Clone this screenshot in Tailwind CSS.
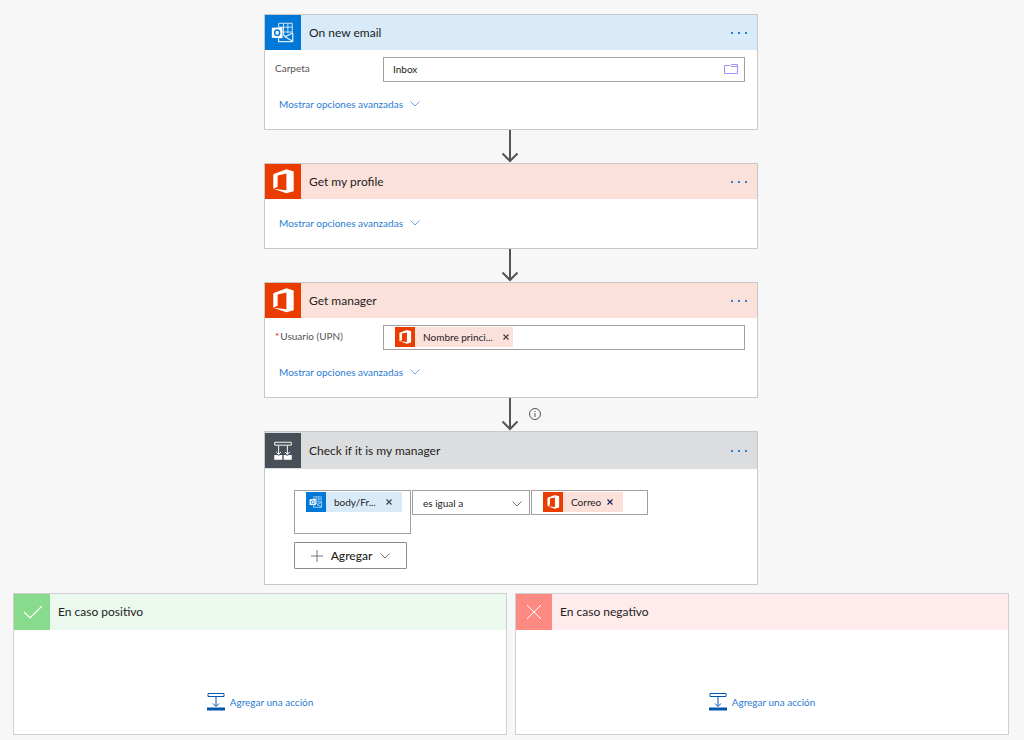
<!DOCTYPE html>
<html lang="es">
<head>
    <meta charset="UTF-8">
    <meta name="viewport" content="width=device-width, initial-scale=1.0">
    <title>Flow designer</title>
    <script src="https://cdn.jsdelivr.net/npm/@tailwindcss/browser@4"></script>
</head>
<body class="min-h-screen bg-[#f7f7f7] pt-[14px] pr-[15px] pb-1 pl-[13px] font-['Lato','Open_Sans',sans-serif] text-[10px] leading-4 text-[#222222]">

    <!-- Shared icons -->
    <svg class="hidden" aria-hidden="true">
        <symbol id="outlook" viewBox="0 0 36 36">
            <rect width="36" height="36" fill="#0078d7"/>
            <g fill="none" stroke="#ffffff" opacity=".85">
                <path d="M13.500 12.500V8.500H27.500V19M18.500 8.500V21M23 8.500V19M14 12.500H27.500M17 17.500H27.500"/>
                <path stroke-width="1.300" d="M28 18.500L20 22.500L28 27M28 18.500V27.500H13.500V24M18 20L21 22.500"/>
            </g>
            <path fill="#ffffff" d="M6.500 13L17.500 12.500V24L6.500 23.500Z"/>
            <ellipse cx="12" cy="18.300" rx="2.600" ry="2.900" fill="none" stroke="#0078d7" stroke-width="1.500"/>
        </symbol>
        <symbol id="office" viewBox="0 0 36 36">
            <rect width="36" height="36" fill="#eb3c00"/>
            <path fill="#ffffff" d="M8 10.500L21.500 5.500L29 7.700V28L21.500 30.200L8 25.500L21.500 27V9.700L12.500 11.800V23.500L8 25.500Z"/>
        </symbol>
        <symbol id="condition" viewBox="0 0 36 36">
            <rect width="36" height="36" fill="#484f58"/>
            <path fill="none" stroke="#ffffff" d="M9.500 9.500H26.500V12.500H9.500ZM13.500 13V22M22.500 13V22M11 19.500L13.500 22L16 19.500M20 19.500L22.500 22L25 19.500"/>
            <path fill="#ffffff" d="M9 22.500H12L13.500 23.500L15 22.500H17.300V27.500H9ZM18.700 22.500H21L22.500 23.500L24 22.500H27V27.500H18.700Z"/>
        </symbol>
        <symbol id="chevron" viewBox="0 0 10 6">
            <path d="M.5 .5L5 5L9.500 .5" fill="none" stroke="currentColor"/>
        </symbol>
        <symbol id="dots" viewBox="0 0 18 2">
            <path d="M0 0H2V2H0ZM7 0H9V2H7ZM14 0H16V2H14Z" fill="currentColor"/>
        </symbol>
        <symbol id="arrow" viewBox="0 0 18 33">
            <path d="M9 0V31M1.500 23.500L9 31L16.500 23.500" fill="none" stroke="#555555" stroke-width="2"/>
        </symbol>
        <symbol id="remove" viewBox="0 0 6 6">
            <path d="M.5 .5L5.500 5.500M5.500 .5L.5 5.500" stroke="currentColor" stroke-width="1.200"/>
        </symbol>
        <symbol id="add-step" viewBox="0 0 18 18">
            <path d="M1 .5H17V3.500H1ZM9 3.500V13M6 10.500L9 13.500L12 10.500" fill="none" stroke="#0058ad"/>
            <path d="M0 14.500H18V17.500H0Z" fill="#0058ad"/>
        </symbol>
    </svg>

    <main class="flex flex-col">

        <!-- Trigger -->
        <section class="mx-auto w-[calc(50%-4px)] border border-[#c8c8c8] bg-white">
            <header class="flex h-[35px] items-center bg-[#d9eaf8]">
                <svg class="h-[35px] w-9 bg-[#0078d7]" aria-hidden="true"><use href="#outlook"/></svg>
                <h2 class="ml-2 grow pt-px text-xs">On new email</h2>
                <button class="mr-2 text-[#2a80dc]" aria-label="Menu"><svg class="h-[2px] w-[18px]"><use href="#dots"/></svg></button>
            </header>
            <div class="flex pt-[7px] pr-3 pl-[10px]">
                <label for="folder" class="w-[108px] shrink-0 pt-[3px] text-[#555555]">Carpeta</label>
                <div class="flex h-[25px] grow items-center border border-[#a0a0a0] pr-[6px] pb-px pl-[9px]">
                    <input id="folder" type="text" value="Inbox" class="min-w-0 grow outline-none">
                    <button class="text-[#9c94f4]" aria-label="Elegir carpeta">
                        <svg class="h-[10px] w-[14px]" viewBox="0 0 14 10" fill="none" stroke="currentColor"><path d="M.5 1.500H6.500L7.500 .5H13.500V9.500H.5ZM7 2.500H13.500"/></svg>
                    </button>
                </div>
            </div>
            <div class="px-[14px] pt-[14px] pb-[17px]">
                <a href="#" class="inline-flex items-center gap-[7px] text-[#2b7cd3]">Mostrar opciones avanzadas <svg class="h-[6px] w-[10px] text-[#6fa3e2]"><use href="#chevron"/></svg></a>
            </div>
        </section>

        <div class="flex justify-center pr-[2px]"><svg class="h-[33px] w-[18px]"><use href="#arrow"/></svg></div>

        <!-- Profile -->
        <section class="mx-auto w-[calc(50%-4px)] border border-[#c8c8c8] bg-white">
            <header class="flex h-[35px] items-center bg-[#fce1da]">
                <svg class="h-[35px] w-9 bg-[#eb3c00]" aria-hidden="true"><use href="#office"/></svg>
                <h2 class="ml-2 grow pt-px text-xs">Get my profile</h2>
                <button class="mr-2 text-[#2a80dc]" aria-label="Menu"><svg class="h-[2px] w-[18px]"><use href="#dots"/></svg></button>
            </header>
            <div class="px-[14px] pt-4 pb-[17px]">
                <a href="#" class="inline-flex items-center gap-[7px] text-[#2b7cd3]">Mostrar opciones avanzadas <svg class="h-[6px] w-[10px] text-[#6fa3e2]"><use href="#chevron"/></svg></a>
            </div>
        </section>

        <div class="flex justify-center pr-[2px]"><svg class="h-[33px] w-[18px]"><use href="#arrow"/></svg></div>

        <!-- Manager -->
        <section class="mx-auto w-[calc(50%-4px)] border border-[#c8c8c8] bg-white">
            <header class="flex h-[35px] items-center bg-[#fce1da]">
                <svg class="h-[35px] w-9 bg-[#eb3c00]" aria-hidden="true"><use href="#office"/></svg>
                <h2 class="ml-2 grow pt-px text-xs">Get manager</h2>
                <button class="mr-2 text-[#2a80dc]" aria-label="Menu"><svg class="h-[2px] w-[18px]"><use href="#dots"/></svg></button>
            </header>
            <div class="flex pt-[7px] pr-3 pl-[10px]">
                <label for="upn" class="w-[108px] shrink-0 pt-[3px] text-[#555555]"><span class="mr-px text-[#e02020]">*</span>Usuario (UPN)</label>
                <div class="flex h-[25px] grow items-center border border-[#a0a0a0] pb-px pl-[11px]">
                    <span class="flex h-5 items-center bg-[#fce1da]">
                        <svg class="size-5" aria-hidden="true"><use href="#office"/></svg>
                        <span class="ml-2">Nombre princi...</span>
                        <button class="mr-1 ml-[10px] text-[#444444]" aria-label="Quitar"><svg class="size-[6px]"><use href="#remove"/></svg></button>
                    </span>
                    <input id="upn" type="text" class="min-w-0 grow outline-none">
                </div>
            </div>
            <div class="px-[14px] pt-[14px] pb-[17px]">
                <a href="#" class="inline-flex items-center gap-[7px] text-[#2b7cd3]">Mostrar opciones avanzadas <svg class="h-[6px] w-[10px] text-[#6fa3e2]"><use href="#chevron"/></svg></a>
            </div>
        </section>

        <div class="relative flex justify-center pr-[2px]">
            <svg class="h-[33px] w-[18px]"><use href="#arrow"/></svg>
            <svg class="absolute top-[10px] left-1/2 ml-[18px] size-3" viewBox="0 0 12 12" fill="none" stroke="#555555"><circle cx="6" cy="6" r="5.500"/><path d="M6 3V4M6 5V9"/></svg>
        </div>

        <!-- Condition -->
        <section class="mx-auto w-[calc(50%-4px)] border border-[#c8c8c8] bg-white">
            <header class="flex h-[37px] items-center bg-[#dcdddf]">
                <svg class="h-[35px] w-9 bg-[#484f58]" aria-hidden="true"><use href="#condition"/></svg>
                <h2 class="ml-2 grow pt-px text-xs">Check if it is my manager</h2>
                <button class="mr-2 text-[#2a80dc]" aria-label="Menu"><svg class="h-[2px] w-[18px]"><use href="#dots"/></svg></button>
            </header>
            <div class="px-[29px] pt-[21px] pb-[15px]">
                <div class="flex items-start gap-px">
                    <div class="flex h-11 w-[117px] flex-col items-start border border-[#a0a0a0] pt-px pl-[11px]">
                        <span class="flex h-5 items-center bg-[#d9eaf8]">
                            <svg class="size-5" aria-hidden="true"><use href="#outlook"/></svg>
                            <span class="ml-2">body/Fr...</span>
                            <button class="mr-[10px] ml-[10px] text-[#444444]" aria-label="Quitar"><svg class="size-[6px]"><use href="#remove"/></svg></button>
                        </span>
                        <input type="text" aria-label="Valor" class="w-full outline-none">
                    </div>
                    <div class="relative h-[25px] w-[118px] border border-[#a0a0a0]">
                        <select aria-label="Operador" class="h-full w-full appearance-none pl-[10px] outline-none">
                            <option>es igual a</option>
                        </select>
                        <svg class="pointer-events-none absolute top-[10px] right-[7px] h-[6px] w-[10px] text-[#777777]"><use href="#chevron"/></svg>
                    </div>
                    <div class="flex h-[25px] w-[117px] items-center border border-[#a0a0a0] pb-px pl-[11px]">
                        <span class="flex h-5 items-center bg-[#fce1da]">
                            <svg class="size-5" aria-hidden="true"><use href="#office"/></svg>
                            <span class="ml-2">Correo</span>
                            <button class="mr-[10px] ml-[6px] text-[#222266]" aria-label="Quitar"><svg class="size-[6px]"><use href="#remove"/></svg></button>
                        </span>
                        <input type="text" aria-label="Valor" class="min-w-0 grow outline-none">
                    </div>
                </div>
                <button class="mt-2 flex h-[27px] w-[113px] items-center justify-center gap-2 rounded-[1px] border border-[#8c8c8c] text-xs font-medium">
                    <svg class="size-3" viewBox="0 0 12 12" stroke="#777777"><path d="M6 0V12M0 6H12"/></svg>
                    Agregar
                    <svg class="h-[6px] w-[10px] text-[#777777]"><use href="#chevron"/></svg>
                </button>
            </div>
        </section>

        <!-- Branches -->
        <div class="mt-2 grid grid-cols-2 gap-2">
            <section class="border border-[#d0d0d0] bg-white">
                <header class="flex h-9 items-center bg-[#ebf8ee]">
                    <svg class="size-9 bg-[#88da8d]" viewBox="0 0 36 36" fill="none" stroke="#ffffff" stroke-width="1.200"><path d="M10 18L16 24L28 12"/></svg>
                    <h2 class="ml-2 text-xs">En caso positivo</h2>
                </header>
                <div class="flex justify-center pt-[63px] pb-[23px]">
                    <a href="#" class="flex items-center gap-[5px] text-[#2b7cd3]"><svg class="size-[18px]"><use href="#add-step"/></svg>Agregar una acción</a>
                </div>
            </section>
            <section class="border border-[#d0d0d0] bg-white">
                <header class="flex h-9 items-center bg-[#ffebeb]">
                    <svg class="size-9 bg-[#fd8a82]" viewBox="0 0 36 36" fill="none" stroke="#ffffff"><path d="M11 11L25 25M25 11L11 25"/></svg>
                    <h2 class="ml-2 text-xs">En caso negativo</h2>
                </header>
                <div class="flex justify-center pt-[63px] pb-[23px]">
                    <a href="#" class="flex items-center gap-[5px] text-[#2b7cd3]"><svg class="size-[18px]"><use href="#add-step"/></svg>Agregar una acción</a>
                </div>
            </section>
        </div>
    </main>
</body>
</html>
